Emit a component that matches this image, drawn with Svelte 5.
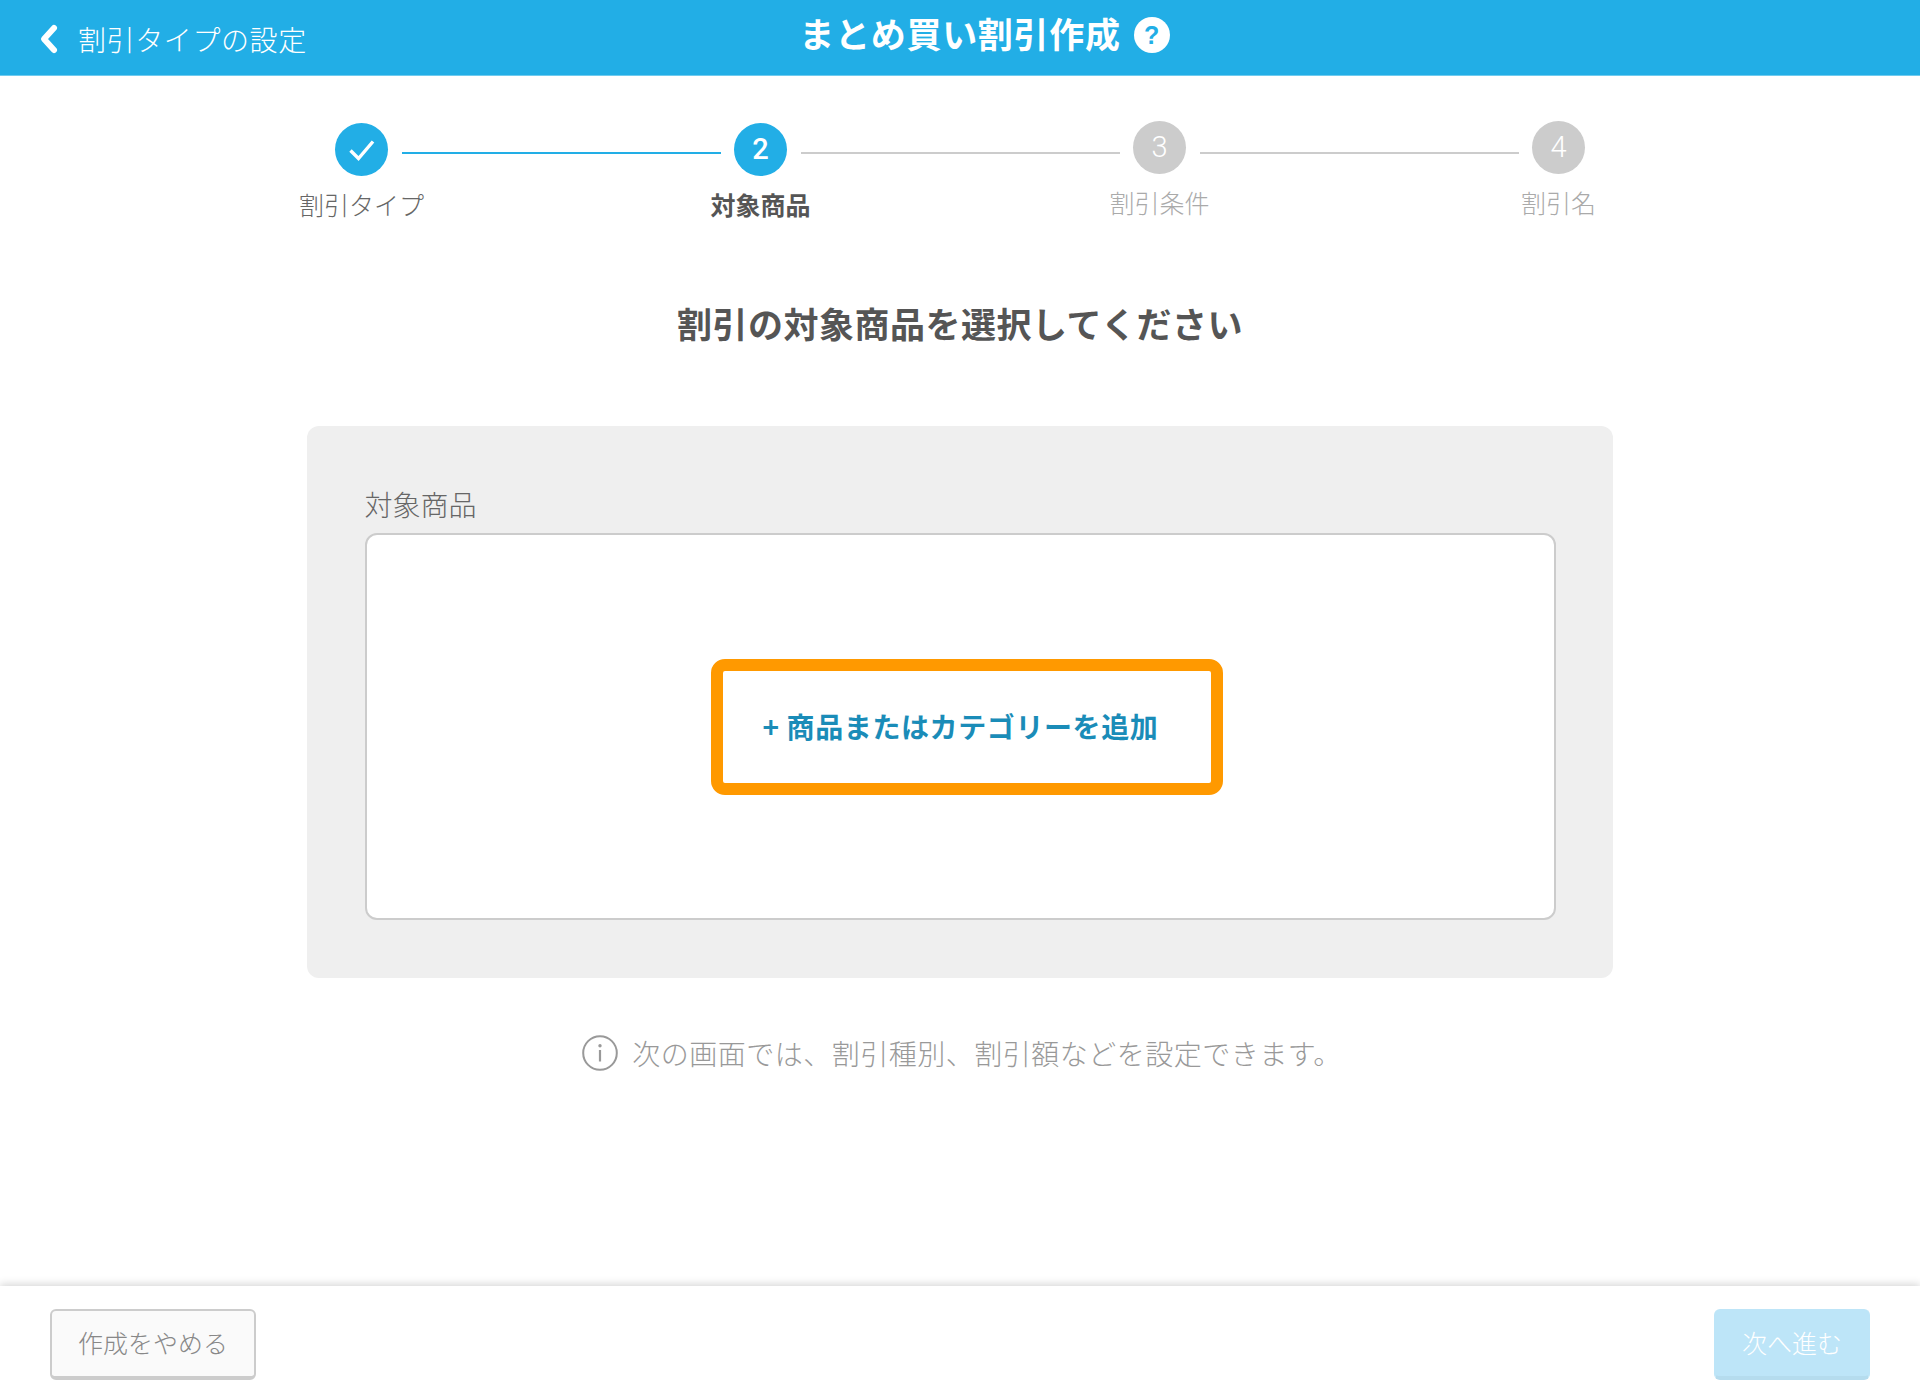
<script>
  const steps = [
    { label: '割引タイプ', state: 'done' },
    { label: '対象商品', state: 'current', n: 2 },
    { label: '割引条件', state: 'pending', n: 3 },
    { label: '割引名', state: 'pending', n: 4 }
  ];
</script>

<div class="page">
  <header class="top">
    <a class="back" href="#back">
      <svg class="chev" viewBox="0 0 20 32" width="20" height="32" aria-hidden="true"><path d="M15 5 L5 16 L15 27" fill="none" stroke="#fff" stroke-width="6" stroke-linecap="round" stroke-linejoin="round"/></svg>
      <span>割引タイプの設定</span>
    </a>
    <h1>まとめ買い割引作成</h1>
    <div class="help" aria-label="help">?</div>
  </header>

  <main>
    <ol class="stepper">
      {#each steps as s, i}
        <li class="step {s.state}">
          <span class="dot">
            {#if s.state === 'done'}
              <svg viewBox="0 0 28 24" width="28" height="24" aria-hidden="true"><path d="M2.5 12.5 L10.5 20.5 L25 3.5" fill="none" stroke="#fff" stroke-width="3.4"/></svg>
            {:else}
              <span class="num">{s.n}</span>
            {/if}
          </span>
          <span class="lab">{s.label}</span>
        </li>
        {#if i < steps.length - 1}
          <li class="line" class:on={s.state === 'done'}></li>
        {/if}
      {/each}
    </ol>

    <h2>割引の対象商品を選択してください</h2>

    <section class="panel">
      <div class="field-label">対象商品</div>
      <div class="box">
        <button class="add">+ 商品またはカテゴリーを追加</button>
      </div>
    </section>

    <p class="note">
      <svg viewBox="0 0 36 36" width="36" height="36" aria-hidden="true">
        <ellipse cx="18" cy="18" rx="16.8" ry="16.8" fill="none" stroke="#999" stroke-width="2"/>
        <circle cx="18" cy="10.8" r="1.7" fill="#999"/>
        <rect x="16.9" y="15" width="2.2" height="11.5" fill="#999"/>
      </svg>
      <span>次の画面では、割引種別、割引額などを設定できます。</span>
    </p>
  </main>

  <footer>
    <button class="btn cancel">作成をやめる</button>
    <button class="btn next">次へ進む</button>
  </footer>
</div>

<style>
  :global(body) {
    margin: 0;
    background: #fff;
    font-family: "Noto Sans CJK JP", "Noto Sans", sans-serif;
    font-weight: 300;
  }
  .page {
    height: 1400px;
    display: flex;
    flex-direction: column;
    overflow: hidden;
  }
  .top {
    height: 75px;
    flex: none;
    background: #22aee6;
    border-bottom: 1px solid #6fcbef;
    display: grid;
    grid-template-columns: 1fr auto 1fr;
    align-items: start;
    color: #fff;
  }
  .back {
    display: flex;
    align-items: center;
    gap: 19px;
    margin: 22px 0 0 39px;
    color: #fff;
    text-decoration: none;
    font-size: 28px;
    letter-spacing: 0.6px;
    line-height: 34px;
    font-weight: 300;
  }
  h1 {
    margin: 9px 0 0;
    font-size: 35px;
    line-height: 48px;
    font-weight: 700;
    letter-spacing: 0.7px;
  }
  .help {
    margin: 17px 0 0 13px;
    width: 36px;
    height: 36px;
    border-radius: 50%;
    background: #fff;
    color: #22aee6;
    font-family: "Liberation Sans", sans-serif;
    font-weight: 700;
    font-size: 25px;
    line-height: 36px;
    text-align: center;
  }
  main {
    flex: 1;
    display: flex;
    flex-direction: column;
    align-items: center;
  }
  .stepper {
    list-style: none;
    margin: 47px 0 0;
    padding: 0;
    display: flex;
    height: 100px;
  }
  .step {
    width: 53px;
    display: flex;
    flex-direction: column;
    align-items: center;
    white-space: nowrap;
  }
  .line {
    width: 319px;
    height: 2px;
    margin: 29px 13.5px 0;
    background: #ccc;
  }
  .line.on { background: #22aee6; }
  .dot {
    width: 53px;
    height: 53px;
    border-radius: 50%;
    background: #22aee6;
    color: #fff;
    display: flex;
    align-items: center;
    justify-content: center;
    font-family: Roboto, "Noto Sans", sans-serif;
    font-size: 29px;
    font-weight: 500;
    flex: none;
  }
  .num { margin-top: -2px; }
  .lab {
    margin-top: 11px;
    font-size: 25px;
    line-height: 34px;
    color: #666;
  }
  .current .lab { color: #555; font-weight: 700; }
  .pending { margin-top: -2px; }
  .pending .dot { background: #ccc; font-weight: 300; }
  .pending .lab { color: #aaa; }

  h2 {
    margin: 76px 0 0;
    font-size: 35px;
    line-height: 48px;
    font-weight: 700;
    color: #555;
    letter-spacing: 0.5px;
  }
  .panel {
    box-sizing: border-box;
    width: 1306px;
    height: 552px;
    margin: 79px 0 0 -1px;
    padding: 57px 57px 57px 58px;
    background: #efefef;
    border-radius: 12px;
  }
  .field-label {
    font-size: 28px;
    line-height: 42px;
    height: 50px;
    color: #666;
  }
  .box {
    box-sizing: border-box;
    height: 387px;
    background: #fff;
    border: 2px solid #ccc;
    border-radius: 12px;
    display: flex;
    align-items: flex-start;
    justify-content: flex-start;
    padding: 124px 0 0 344px;
  }
  .add {
    box-sizing: border-box;
    width: 512px;
    height: 136px;
    background: #fff;
    border: 12px solid #ff9900;
    border-radius: 14px;
    padding: 0 12px 2px 0;
    color: #1a8cb8;
    font: inherit;
    font-size: 28px;
    font-weight: 700;
    letter-spacing: 0.6px;
    white-space: nowrap;
  }
  .note {
    margin: 56px 0 0 4px;
    display: flex;
    align-items: center;
    gap: 14px;
    color: #999;
    font-size: 28px;
    letter-spacing: 0.5px;
    line-height: 38px;
  }
  footer {
    flex: none;
    height: 114px;
    box-sizing: border-box;
    padding: 23px 50px 0;
    display: flex;
    justify-content: space-between;
    align-items: flex-start;
    background: #fff;
    box-shadow: 0 -2px 8px rgba(0, 0, 0, 0.16);
    position: relative;
  }
  .btn {
    box-sizing: border-box;
    height: 71px;
    border-radius: 6px;
    font: inherit;
    font-size: 25px;
    padding: 0 0 3px;
  }
  .cancel {
    width: 206px;
    background: #fafafa;
    color: #888;
    border: 2px solid #ccc;
    border-bottom-width: 4px;
  }
  .next {
    width: 156px;
    background: #bde5f8;
    color: #fff;
    border: 2px solid #bde5f8;
    border-bottom: 4px solid #b5dcee;
  }
</style>
